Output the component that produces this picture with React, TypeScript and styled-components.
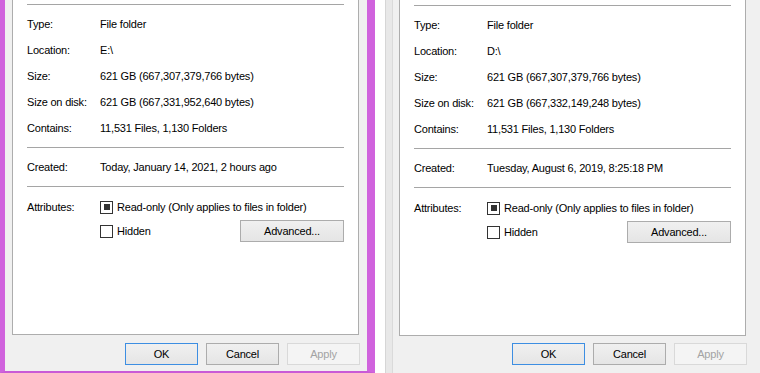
import {Fragment} from "react";
import styled, {createGlobalStyle} from "styled-components";

const Global = createGlobalStyle`
    html, body {
        margin: 0;
        padding: 0;
        background: #ffffff;
    }
    body {
        font-family: "Liberation Sans", Arial, sans-serif;
        font-size: 11px;
        letter-spacing: -0.2px;
        color: #000;
    }
`

const Desktop = styled.div`
    display: flex;
    align-items: flex-start;
    height: 373px;
    overflow: hidden;
    gap: 10px;
`

const Window = styled.div<{$accent?: boolean}>`
    display: flex;
    flex-direction: column;
    flex-shrink: 0;
    box-sizing: border-box;
    height: 373px;
    background: #f0f0f0;
    ${p => p.$accent ? `
        width: 375px;
        border-left: 5px solid #d063dd;
        border-right: 8px solid #d063dd;
        border-bottom: 2px solid #c95ad6;
        padding: 0 8px 0 7px;
    ` : `
        flex: 1;
        border-left: 1px solid #d6d6d6;
        box-shadow: inset 6px 0 0 #e8e8e8, inset 7px 0 0 #dadada;
        padding: 0 0 0 13px;
    `}
`

const Panel = styled.div<{$shift: number}>`
    box-sizing: border-box;
    width: 347px;
    height: ${p => 335 + p.$shift}px;
    flex-shrink: 0;
    background: #ffffff;
    border: 1px solid #adadad;
    border-top: none;
    padding: ${p => 4 + p.$shift}px 14px 0;
    display: flex;
    flex-direction: column;
`

const Rule = styled.div<{$gap?: number}>`
    height: 1px;
    background: #a5a5a5;
    margin-top: ${p => p.$gap ?? 0}px;
    flex-shrink: 0;
`

const Fields = styled.div`
    display: grid;
    grid-template-columns: 73px 1fr;
    grid-auto-rows: 26px;
    align-items: center;
    margin-top: 6px;
`

const Label = styled.span`
    white-space: nowrap;
`

const Value = styled.span`
    white-space: nowrap;
`

const Attributes = styled.div`
    display: grid;
    grid-template-columns: 73px 1fr;
    grid-template-rows: 26px 22px;
    align-items: center;
    margin-top: 7px;
`

const Check = styled.label`
    display: flex;
    align-items: center;
    gap: 4px;
    white-space: nowrap;
`

const Box = styled.span<{$mixed?: boolean}>`
    box-sizing: border-box;
    width: 13px;
    height: 13px;
    border: 1px solid #333333;
    background: #ffffff;
    display: flex;
    align-items: center;
    justify-content: center;
    &::after {
        content: "";
        display: ${p => p.$mixed ? "block" : "none"};
        width: 6px;
        height: 6px;
        background: #333333;
    }
`

const CheckRow = styled.div`
    display: flex;
    align-items: center;
    justify-content: space-between;
`

const Button = styled.div<{$primary?: boolean; $disabled?: boolean; $width?: number}>`
    box-sizing: border-box;
    width: ${p => p.$width ?? 73}px;
    height: 22px;
    display: flex;
    align-items: center;
    justify-content: center;
    background: ${p => p.$disabled ? "#f4f4f4" : "linear-gradient(#f0f0f0, #e5e5e5)"};
    border: 1px solid ${p => p.$primary ? "#3d8ee2" : p.$disabled ? "#d9d9d9" : "#acacac"};
    color: ${p => p.$disabled ? "#a3a3a3" : "#000"};
`

const Footer = styled.div<{$shift: number}>`
    display: flex;
    justify-content: flex-end;
    gap: 8px;
    width: 348px;
    margin-top: ${p => 8 - p.$shift}px;
`

interface IFolder {
    location: string,
    sizeOnDisk: string,
    created: string,
    shift: number,
}

const folders: IFolder[] = [
    {location: "E:\\", sizeOnDisk: "621 GB (667,331,952,640 bytes)", created: "Today, January 14, 2021, 2 hours ago", shift: 0},
    {location: "D:\\", sizeOnDisk: "621 GB (667,332,149,248 bytes)", created: "Tuesday, August 6, 2019, 8:25:18 PM", shift: 1},
]

const Properties = ({folder, accent}: {folder: IFolder, accent?: boolean}) => {
    const rows: [string, string][] = [
        ["Type:", "File folder"],
        ["Location:", folder.location],
        ["Size:", "621 GB (667,307,379,766 bytes)"],
        ["Size on disk:", folder.sizeOnDisk],
        ["Contains:", "11,531 Files, 1,130 Folders"],
    ]
    return (
        <Window $accent={accent}>
            <Panel $shift={folder.shift}>
                <Rule />
                <Fields>
                    {rows.map(([k, v]) => (
                        <Fragment key={k}>
                            <Label>{k}</Label>
                            <Value>{v}</Value>
                        </Fragment>
                    ))}
                </Fields>
                <Rule $gap={6} />
                <Fields>
                    <Label>Created:</Label>
                    <Value>{folder.created}</Value>
                </Fields>
                <Rule $gap={6} />
                <Attributes>
                    <Label>Attributes:</Label>
                    <Check><Box $mixed />Read-only (Only applies to files in folder)</Check>
                    <span />
                    <CheckRow>
                        <Check><Box />Hidden</Check>
                        <Button $width={104}>Advanced...</Button>
                    </CheckRow>
                </Attributes>
            </Panel>
            <Footer $shift={folder.shift}>
                <Button $primary>OK</Button>
                <Button>Cancel</Button>
                <Button $disabled>Apply</Button>
            </Footer>
        </Window>
    )
}

const App = () => {
    return (
        <>
            <Global />
            <Desktop>
                <Properties folder={folders[0]} accent />
                <Properties folder={folders[1]} />
            </Desktop>
        </>
    )
}

export default App;
